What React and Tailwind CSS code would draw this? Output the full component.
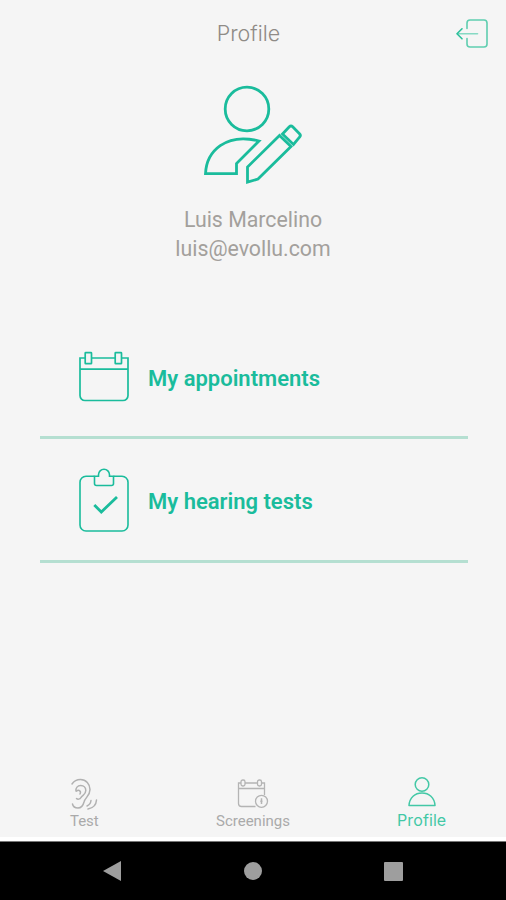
import React from 'react';

const LogoutIcon = () => (
  <svg width="34" height="30" viewBox="0 0 34 30" fill="none" stroke="#5fceb0" strokeWidth="1.600" strokeLinecap="round" strokeLinejoin="round">
    <path d="M12 9.500V4a3 3 0 0 1 3-3h14a3 3 0 0 1 3 3v21a3 3 0 0 1-3 3H15a3 3 0 0 1-3-3v-5.500" />
    <path d="M2.500 14.800H22.500" stroke="#86d9c3" />
    <path d="M7 9.800L2 14.800L7 19.800" stroke="#2cc09c" />
  </svg>
);

const AvatarIcon = () => (
  <svg width="104" height="104" viewBox="1 0 104 104" fill="none" stroke="#1abc9c" strokeWidth="2.800">
    <circle cx="47" cy="25" r="21.800" />
    <path d="M5.500 89.700C6.500 67 26 48.500 59 57L36.500 79.500V89.700Z" />
    <path d="M79.500 51.500L47.500 83V98.200L58 95L91 62.500Z" />
    <path d="M82.500 50L89.300 42.800Q91 41.200 92.700 42.800L99.500 49.800Q101.200 51.500 99.500 53.200L93.500 60.500Z" />
  </svg>
);

const CalendarIcon = () => (
  <svg width="52" height="52" viewBox="0 0 52 52" fill="none" stroke="#1abc9c" strokeWidth="1.700">
    <path d="M7 7H2V44.500a5 5 0 0 0 5 5H45a5 5 0 0 0 5-5V7H43.500" />
    <path d="M13.500 7H37M2 18.200H50" />
    <rect x="7.200" y="1.700" width="6.300" height="11" rx="0.500" />
    <rect x="37.200" y="1.700" width="6.300" height="11" rx="0.500" />
  </svg>
);

const ClipboardIcon = () => (
  <svg width="52" height="66" viewBox="0 0 52 66" fill="none" stroke="#1abc9c" strokeWidth="1.600">
    <path d="M16.500 8.200H8a6 6 0 0 0-6 6V57a6 6 0 0 0 6 6H44a6 6 0 0 0 6-6V14.200a6 6 0 0 0-6-6H35.500" />
    <path d="M16.500 8.200H20.500V6.800a5.500 5.500 0 0 1 11 0V8.200H35.500V15.500a2 2 0 0 1-2 2H18.500a2 2 0 0 1-2-2Z" />
    <path d="M16.300 37L23.300 44L39 29" strokeWidth="2.800" />
  </svg>
);

const EarIcon = () => (
  <svg width="30" height="32" viewBox="0 0 30 32" fill="none" stroke="#b1b1b1" strokeWidth="1.500" strokeLinecap="round">
    <path d="M3 6C5 3 8 1.500 11.500 1.500C17 1.500 21 6 21 11.500C21 18 16 19.500 15 24C14 28 12 30 9 30C6 30 4 28.500 3.500 26" />
    <path d="M7 13C6.500 10 8.500 7.500 11.700 7.500C15 7.500 16.800 10 16.800 12.500C16.800 16.500 13.500 17 12 19.500C11 21.500 8.500 21.500 7.500 20.500" />
    <path d="M7.500 13C10 11.500 12.500 13 11 16" />
    <path d="M22 22.500Q21.500 26.500 18 28M27.500 22Q27 29.500 19 31" />
  </svg>
);

const ScreeningIcon = () => (
  <svg width="32" height="30" viewBox="0 0 32 30" fill="none" stroke="#b4b4b4" strokeWidth="1.300">
    <path d="M4 4H1.500V24.500a3 3 0 0 0 3 3H18.500M8 4H20.500M24.500 4H27.500V16M1.500 9.500H27.500" />
    <rect x="4" y="1" width="4" height="6" rx="1.800" />
    <rect x="20.500" y="1" width="4" height="6" rx="1.800" />
    <circle cx="24.500" cy="22.300" r="6" />
    <path d="M24.500 19.300V25M23.300 22.300H25.500" strokeWidth="1.500" />
  </svg>
);

const ProfileIcon = () => (
  <svg width="30" height="32" viewBox="0 0 30 32" fill="none" stroke="#43c8a6" strokeWidth="1.500" strokeLinejoin="round">
    <circle cx="15" cy="8.500" r="6.800" />
    <path d="M2 29.500C2.500 21.500 8 17 15 17S27.500 21.500 28 29.500Z" />
  </svg>
);

const menuItems = [
  { id: 'appointments', icon: CalendarIcon, label: 'My appointments', className: 'h-[125px] pt-[37px]', labelClassName: 'pt-[13px]' },
  { id: 'hearing-tests', icon: ClipboardIcon, label: 'My hearing tests', className: 'h-[124px] pt-[29px]', labelClassName: 'pt-[19px]' },
];

const App = () => {
  return (
    <div className="flex h-[900px] w-[506px] flex-col overflow-hidden bg-[#f5f5f5] font-['Roboto',sans-serif]">
      {/* Header */}
      <header className="grid h-[67px] shrink-0 grid-cols-[1fr_auto_1fr] items-center pr-[17px] pl-2">
        <h1 className="col-start-2 font-['Inter',sans-serif] text-[21.500px] font-light text-[#8f8b87]">Profile</h1>
        <button className="justify-self-end" aria-label="Log out">
          <LogoutIcon />
        </button>
      </header>

      {/* User details */}
      <section className="flex h-[247px] shrink-0 flex-col items-center pt-[17px]">
        <AvatarIcon />
        <div className="pt-[18px] text-center text-[21.300px] leading-[28.500px] text-[#a3a09c]">
          <p>Luis Marcelino</p>
          <p>luis@evollu.com</p>
        </div>
      </section>

      {/* Menu */}
      <main className="flex-1 pr-[38px] pl-10">
        {menuItems.map((item) => (
          <button
            key={item.id}
            className={`flex w-full items-start gap-[18px] border-b-[3px] border-[#b5dfd1] pl-[38px] ${item.className}`}
          >
            <item.icon />
            <span className={`text-[22px] leading-[30px] font-semibold text-[#1abc9c] ${item.labelClassName}`}>{item.label}</span>
          </button>
        ))}
      </main>

      {/* Tab bar */}
      <nav className="grid h-[62px] shrink-0 grid-cols-3 text-[15px] leading-5 text-[#aaa]">
        <button className="flex flex-col items-center justify-start gap-[1px] pt-[3px]">
          <EarIcon />
          <span>Test</span>
        </button>
        <button className="flex flex-col items-center justify-start gap-[2px] pt-[4px]">
          <ScreeningIcon />
          <span>Screenings</span>
        </button>
        <button className="flex flex-col items-center justify-start gap-[2px] pt-px text-[#43c8a6]">
          <ProfileIcon />
          <span className="font-['Inter',sans-serif] text-[16px] tracking-[0.100px]">Profile</span>
        </button>
      </nav>

      {/* System navigation */}
      <footer className="h-[63px] shrink-0 border-t-[4px] border-white bg-black">
        <div className="flex h-full items-center justify-between border-t border-[#777] pr-[103px] pl-[102px]">
          <svg width="20" height="22" viewBox="0 0 20 22" fill="#9e9e9e">
            <path d="M1 11L19 1V21Z" />
          </svg>
          <div className="h-[18px] w-[18px] rounded-full bg-[#9e9e9e]" />
          <div className="h-[19px] w-[19px] rounded-[1px] bg-[#9e9e9e]" />
        </div>
      </footer>
    </div>
  );
};

export default App;
